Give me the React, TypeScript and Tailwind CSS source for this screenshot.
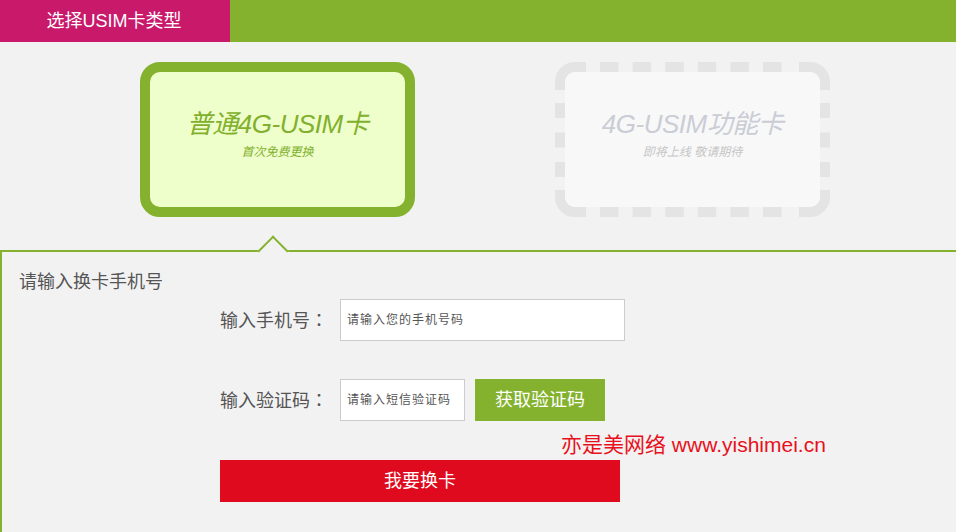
import React from "react"

function DashedFrame() {
  // dashed rounded frame of the disabled card
  const h = [45, 77.6, 110.2, 142.8, 175.4, 208]
  const v = [41, 70.5, 100]
  return (
    <svg className="absolute inset-0" width="275" height="155" viewBox="0 0 275 155" fill="none">
      <g stroke="#e4e4e4" strokeWidth="10">
        <path d="M5 28V20A15 15 0 0 1 20 5H31" />
        <path d="M244 5H255A15 15 0 0 1 270 20V28" />
        <path d="M5 128V135A15 15 0 0 0 20 150H31" />
        <path d="M244 150H255A15 15 0 0 0 270 135V128" />
        {h.map((x) => (
          <React.Fragment key={x}>
            <line x1={x} y1="5" x2={x + 18.5} y2="5" />
            <line x1={x} y1="150" x2={x + 18.5} y2="150" />
          </React.Fragment>
        ))}
        {v.map((y) => (
          <React.Fragment key={y}>
            <line x1="5" y1={y} x2="5" y2={y + 15} />
            <line x1="270" y1={y} x2="270" y2={y + 15} />
          </React.Fragment>
        ))}
      </g>
    </svg>
  )
}

function Colon() {
  return <span style={{ fontFamily: '"Noto Sans CJK TC", sans-serif' }}>：</span>
}

export default function App() {
  return (
    <div
      className="w-[956px] h-[532px] bg-[#f2f2f2] flex flex-col overflow-hidden"
      style={{ fontFamily: '"Liberation Sans", "Noto Sans CJK SC", sans-serif' }}
    >
      {/* header */}
      <div className="h-[42px] bg-[#84b22e] flex shrink-0">
        <div className="w-[230px] bg-[#c8196b] text-white text-[18px] flex items-center justify-center pr-[2px]">
          选择USIM卡类型
        </div>
      </div>

      {/* card choices */}
      <div className="flex pl-[140px] gap-[140px] pt-[20px] shrink-0">
        <div className="w-[275px] h-[155px] rounded-[20px] border-[10px] border-[#84b22e] bg-[#eeffcc] flex flex-col items-center pt-[36px] cursor-pointer">
          <div className="text-[26px] leading-[32px] italic text-[#82b02c] tracking-[-0.5px]">普通4G-USIM卡</div>
          <div className="text-[12px] leading-[16px] italic text-[#82b02c] mt-[4px]">首次免费更换</div>
        </div>
        <div className="relative w-[275px] h-[155px] p-[10px]">
          <DashedFrame />
          <div className="relative h-full rounded-[10px] bg-[#f8f8f8] flex flex-col items-center pt-[36px]">
            <div className="text-[26px] leading-[32px] italic text-[#cacdd5] tracking-[-0.5px]">4G-USIM功能卡</div>
            <div className="text-[12px] leading-[16px] italic text-[#c6c6c6] mt-[4px]">即将上线 敬请期待</div>
          </div>
        </div>
      </div>

      {/* form section */}
      <div className="relative mt-[33px] flex-1 border-t-2 border-l-2 border-[#84b22e] pl-[17px] pt-[18px]">
        <div className="absolute left-[260px] -top-[12px] w-[22px] h-[22px] rotate-45 border-t-2 border-l-2 border-[#84b22e] bg-[#f2f2f2]" />

        <div className="text-[18px] leading-[24px] text-[#555]">请输入换卡手机号</div>

        <div className="ml-[201px] mt-[5px] flex flex-col">
          <div className="flex items-center">
            <label className="w-[120px] text-[18px] text-[#555]">
              输入手机号<Colon />
            </label>
            <input
              className="w-[285px] h-[42px] border border-[#cccccc] bg-white px-[6px] text-[12px] tracking-[1px] text-[#333] placeholder:text-[#555] outline-none"
              placeholder="请输入您的手机号码"
            />
          </div>
          <div className="flex items-center mt-[38px]">
            <label className="w-[120px] text-[18px] text-[#555]">
              输入验证码<Colon />
            </label>
            <input
              className="w-[125px] h-[42px] border border-[#cccccc] bg-white px-[6px] text-[12px] tracking-[1px] text-[#333] placeholder:text-[#555] outline-none"
              placeholder="请输入短信验证码"
            />
            <button className="ml-[10px] w-[130px] h-[42px] bg-[#84b22e] text-white text-[18px]">获取验证码</button>
          </div>
          <button className="mt-[39px] w-[400px] h-[42px] bg-[#df0a1e] text-white text-[18px]">我要换卡</button>
        </div>

        <div className="absolute left-[559px] top-[179px] text-[21px] leading-[28px] text-[#e8101c] whitespace-nowrap">
          亦是美网络 www.yishimei.cn
        </div>
      </div>
    </div>
  )
}
